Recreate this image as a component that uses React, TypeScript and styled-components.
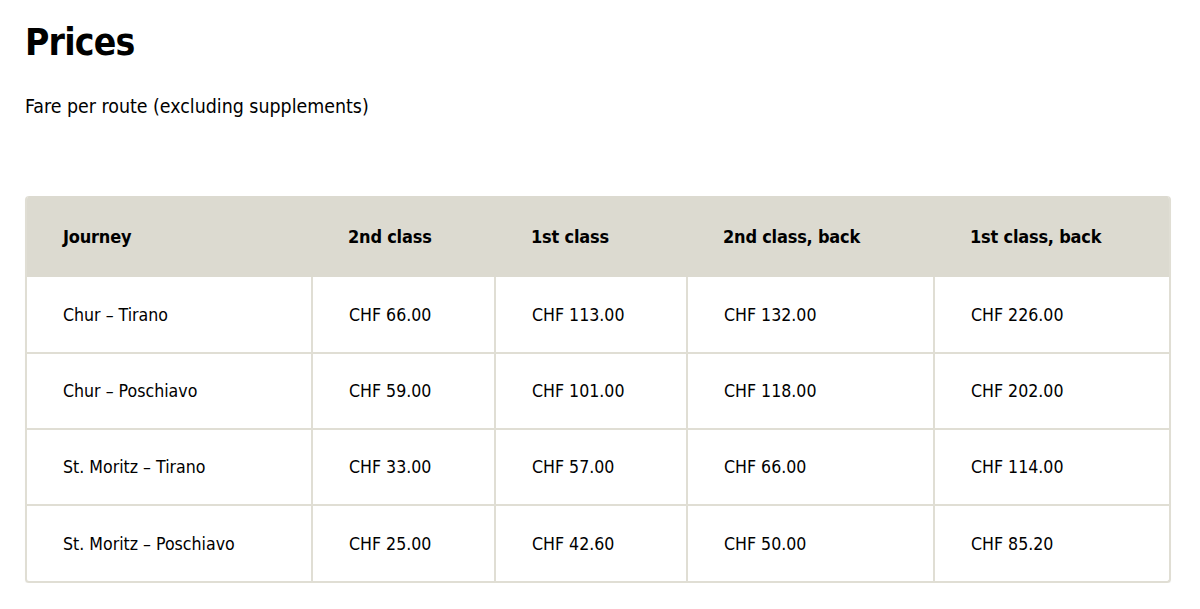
import React from "react";
import styled, { createGlobalStyle } from "styled-components";

const Global = createGlobalStyle`
  html, body { margin: 0; padding: 0; background: #fff; }
  body { font-family: "DejaVu Sans Condensed", "DejaVu Sans", sans-serif; color: #000; }
`;

const Page = styled.main`
  padding: 18px 29px 0 25px;
`;

const Title = styled.h1`
  margin: 0;
  font-size: 37px;
  font-weight: 700;
  line-height: 50px;
  letter-spacing: -0.8px;
`;

const Lead = styled.p`
  margin: 26px 0 0;
  font-size: 19.4px;
  line-height: 26px;
`;

const TableWrap = styled.div`
  margin-top: 76px;
  border: 2px solid #e0ded4;
  border-top: none;
  border-radius: 4px;
  overflow: hidden;
  box-shadow: 0 1px 1px rgba(0,0,0,0.05);
`;

const Table = styled.table`
  width: 100%;
  border-collapse: collapse;
  table-layout: fixed;
`;

const HeadCell = styled.th<{ $w: number }>`
  width: ${(p) => p.$w}px;
  height: 81px;
  padding: 0 0 0 36px;
  text-align: left;
  background: #dcdad0;
  font-size: 18px;
  font-weight: 700;
  letter-spacing: -0.2px;
  box-sizing: border-box;
`;

const Row = styled.tr`
  & + & td { border-top: 2px solid #e0ded4; }
`;

const Cell = styled.td`
  height: 76px;
  padding: 0 0 0 36px;
  font-size: 17.6px;
  box-sizing: border-box;
  & + & { border-left: 2px solid #e0ded4; }
`;

const cols = [
  { label: "Journey", w: 285 },
  { label: "2nd class", w: 183 },
  { label: "1st class", w: 192 },
  { label: "2nd class, back", w: 247 },
  { label: "1st class, back", w: 237 },
];

const rows = [
  ["Chur – Tirano", "CHF 66.00", "CHF 113.00", "CHF 132.00", "CHF 226.00"],
  ["Chur – Poschiavo", "CHF 59.00", "CHF 101.00", "CHF 118.00", "CHF 202.00"],
  ["St. Moritz – Tirano", "CHF 33.00", "CHF 57.00", "CHF 66.00", "CHF 114.00"],
  ["St. Moritz – Poschiavo", "CHF 25.00", "CHF 42.60", "CHF 50.00", "CHF 85.20"],
];

export default function App() {
  return (
    <Page>
      <Global />
      <Title>Prices</Title>
      <Lead>Fare per route (excluding supplements)</Lead>
      <TableWrap>
        <Table>
          <thead>
            <tr>
              {cols.map((c) => (
                <HeadCell key={c.label} $w={c.w}>{c.label}</HeadCell>
              ))}
            </tr>
          </thead>
          <tbody>
            {rows.map((r) => (
              <Row key={r[0]}>
                {r.map((v, i) => (
                  <Cell key={i}>{v}</Cell>
                ))}
              </Row>
            ))}
          </tbody>
        </Table>
      </TableWrap>
    </Page>
  );
}
